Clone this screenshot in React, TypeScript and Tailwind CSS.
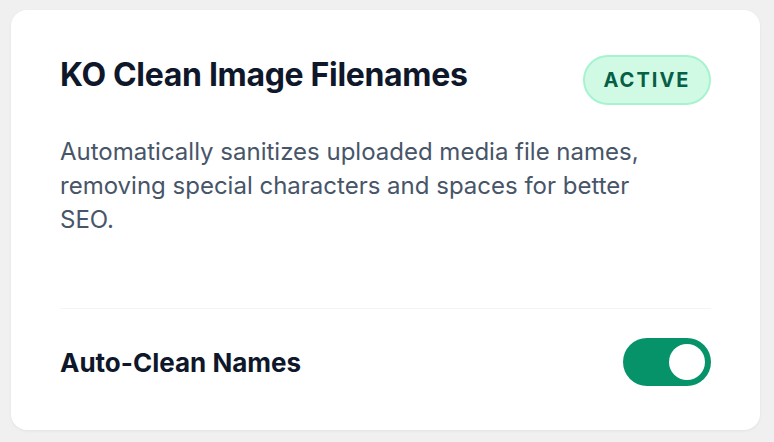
import { useState } from 'react'

export default function App() {
    const [enabled, setEnabled] = useState(true)

    return (
        <div className="min-h-screen bg-[#f0f0f1] pt-[10px] pl-[11px] pr-[14px] pb-[12px] font-['Inter',sans-serif]">
            <div className="bg-white rounded-2xl shadow-[0_1px_3px_rgba(0,0,0,0.06)] pl-[49px] pr-[49px] pt-[45px] pb-[44px]">
                <div className="flex items-start justify-between">
                    <h1 className="text-[32px] leading-10 font-bold text-[#0f172a] tracking-[-0.01em]">
                        KO Clean Image Filenames
                    </h1>
                    <span className="h-[50px] w-[128px] flex items-center justify-center rounded-full bg-[#d1fae5] border-2 border-[#a7f3d0] text-[#065f46] text-[20px] font-bold tracking-[0.1em]">
                        ACTIVE
                    </span>
                </div>

                <p className="mt-[30px] max-w-[600px] text-[24px] leading-[34px] text-[#475569]">
                    Automatically sanitizes uploaded media file names, removing special characters and spaces for better SEO.
                </p>

                <div className="mt-[71px] border-t border-[#f1f5f9] pt-[29px] flex items-center justify-between">
                    <span className="text-[26px] font-bold text-[#0f172a]">Auto-Clean Names</span>
                    <button
                        onClick={() => setEnabled(!enabled)}
                        className={`w-[88px] h-12 rounded-full flex items-center px-1.5 transition-colors ${enabled ? 'bg-[#06936a] justify-end' : 'bg-slate-300 justify-start'}`}
                    >
                        <span className="w-9 h-9 rounded-full bg-white" />
                    </button>
                </div>
            </div>
        </div>
    )
}
